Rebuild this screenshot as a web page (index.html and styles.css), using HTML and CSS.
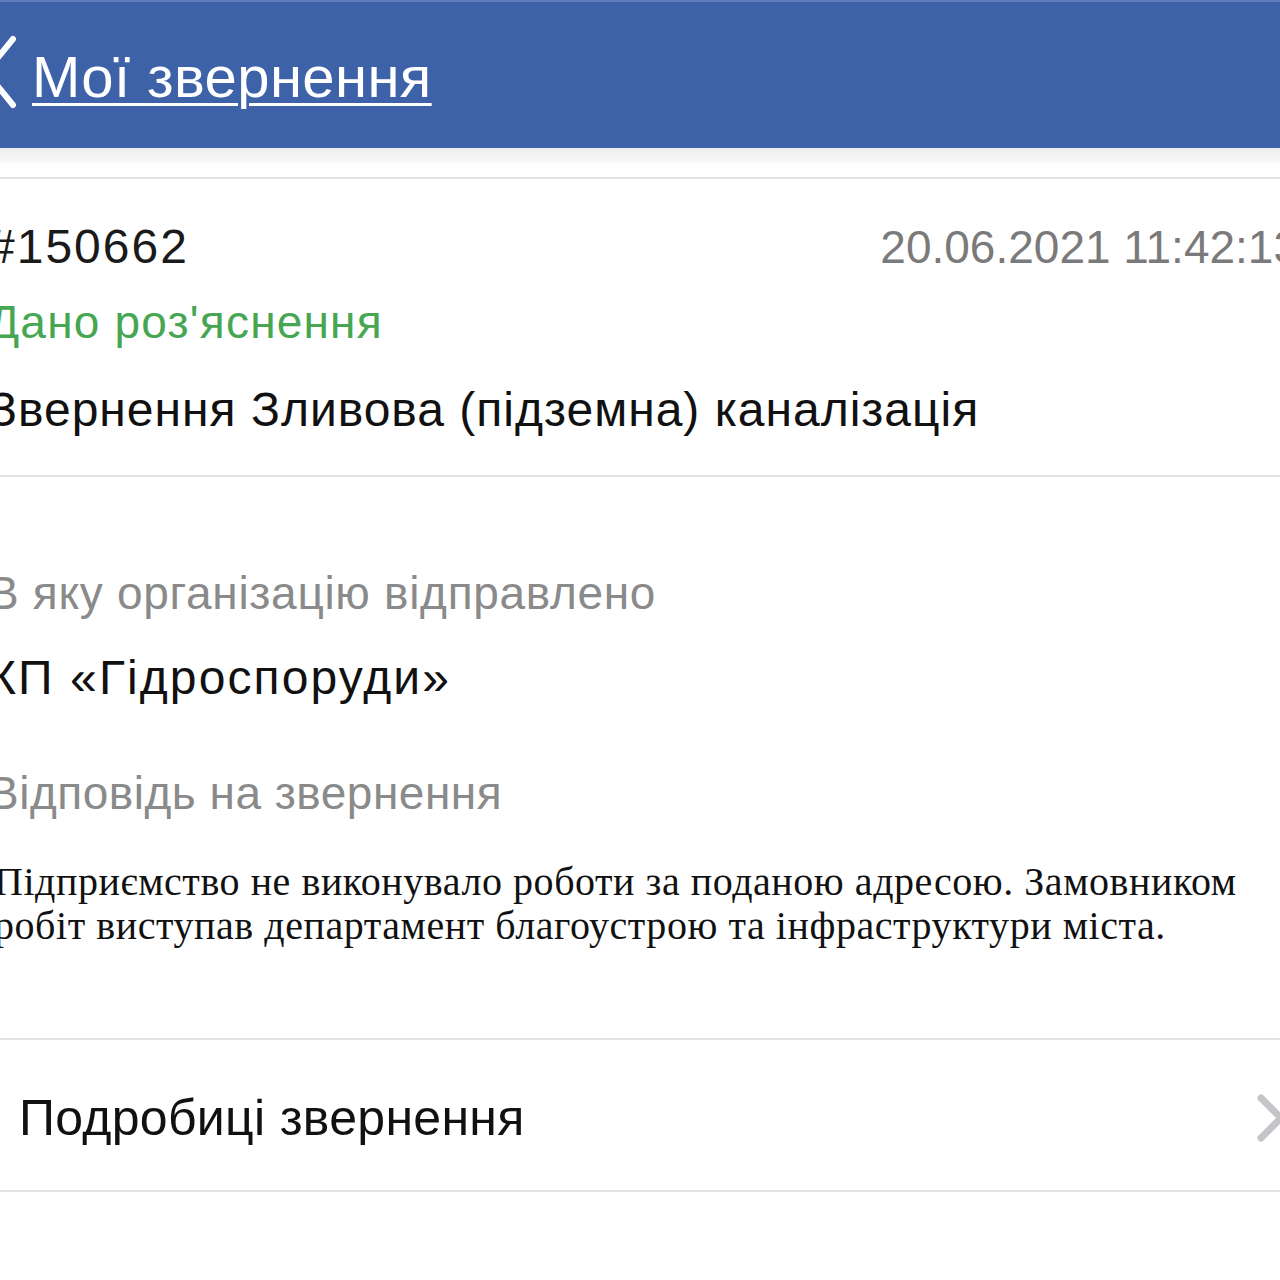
FILE: index.html
```html
<!DOCTYPE html>
<html lang="uk">
<head>
<meta charset="utf-8">
<title>Мої звернення</title>
<link rel="stylesheet" href="styles.css">
</head>
<body>
<header class="nav">
  <svg class="nav-back" width="40" height="80" viewBox="0 0 40 80" aria-hidden="true">
    <polyline points="33,4 6,37 33,70" fill="none" stroke="#ffffff" stroke-width="6" stroke-linecap="round" stroke-linejoin="round"/>
  </svg>
  <a class="nav-title" href="#">Мої звернення</a>
</header>
<div class="gap"></div>
<section class="card">
  <div class="content">
    <div class="id-row">
      <span class="id">#150662</span>
      <span class="date">20.06.2021 11:42:13</span>
    </div>
    <div class="status">Дано роз'яснення</div>
    <div class="subject">Звернення Зливова (підземна) каналізація</div>
  </div>
</section>
<section class="card details">
  <div class="content">
    <div class="label first">В яку організацію відправлено</div>
    <div class="value">КП «Гідроспоруди»</div>
    <div class="label second">Відповідь на звернення</div>
    <p class="answer">Підприємство не виконувало роботи за поданою адресою. Замовником робіт виступав департамент благоустрою та інфраструктури міста.</p>
  </div>
</section>
<div class="link-row">
  <span class="link-text">Подробиці звернення</span>
  <svg class="link-chevron" width="40" height="60" viewBox="0 0 40 60" aria-hidden="true">
    <polyline points="8,10 28,30 8,50" fill="none" stroke="#c5c5c9" stroke-width="7" stroke-linecap="round" stroke-linejoin="round"/>
  </svg>
</div>
</body>
</html>
```

FILE: styles.css
```css
html, body {
  margin: 0;
  padding: 0;
  background: #ffffff;
}
body {
  width: 1280px;
  height: 1280px;
  overflow: hidden;
  font-family: "Liberation Sans", Arial, sans-serif;
  color: #111111;
}
.nav {
  height: 148px;
  border-top: 2px solid #5c7cbb;
  background: #3d62a7;
  display: flex;
  align-items: center;
  padding-top: 4px;
  box-sizing: border-box;
}
.nav-back {
  margin-left: -20px;
  margin-top: -4px;
  flex: none;
}
.nav-title {
  margin-left: 12px;
  color: #ffffff;
  font-size: 58px;
  letter-spacing: 0.4px;
  line-height: 70px;
  text-decoration: underline;
  text-decoration-thickness: 3px;
  text-underline-offset: 6px;
}
.gap {
  height: 31px;
  background: linear-gradient(#ededed, #f6f6f6 40%, #fdfdfd 55%, #ffffff);
  border-bottom: 2px solid #e2e2e2;
  box-sizing: border-box;
}
.card {
  border-bottom: 2px solid #e2e2e2;
}
.content {
  margin: 0 -37px 0 -12px;
}
.id-row {
  display: flex;
  justify-content: space-between;
  align-items: center;
  padding-top: 38px;
  line-height: 60px;
}
.id {
  font-size: 48px;
  letter-spacing: 2px;
  color: #1a1a1a;
}
.date {
  font-size: 46px;
  margin-right: 18px;
  color: #7a7a7a;
}
.status {
  margin-top: 17px;
  line-height: 56px;
  font-size: 46px;
  letter-spacing: 1.2px;
  color: #47a651;
}
.subject {
  margin-top: 30px;
  line-height: 60px;
  font-size: 48px;
  letter-spacing: 1px;
  padding-bottom: 35px;
}
.details .content {
  padding-bottom: 90px;
}
.label {
  line-height: 56px;
  font-size: 46px;
  color: #8a8a8a;
}
.label.first {
  margin-top: 88px;
  letter-spacing: 0.7px;
}
.value {
  margin-top: 29px;
  line-height: 56px;
  font-size: 48px;
  letter-spacing: 2.1px;
  color: #111111;
}
.label.second {
  margin-top: 59px;
  letter-spacing: 0.5px;
}
.answer {
  margin: 39px 0 0 6px;
  width: 1272px;
  font-family: "Liberation Serif", "Times New Roman", serif;
  font-size: 40px;
  letter-spacing: 0.55px;
  line-height: 44px;
  color: #111111;
}
.link-row {
  height: 152px;
  box-sizing: border-box;
  padding-top: 5px;
  display: flex;
  align-items: center;
  justify-content: space-between;
  padding-left: 19px;
  border-bottom: 2px solid #e2e2e2;
}
.link-text {
  font-size: 50px;
  letter-spacing: 0.3px;
  color: #111111;
}
.link-chevron {
  margin-right: -13px;
  flex: none;
}
```
